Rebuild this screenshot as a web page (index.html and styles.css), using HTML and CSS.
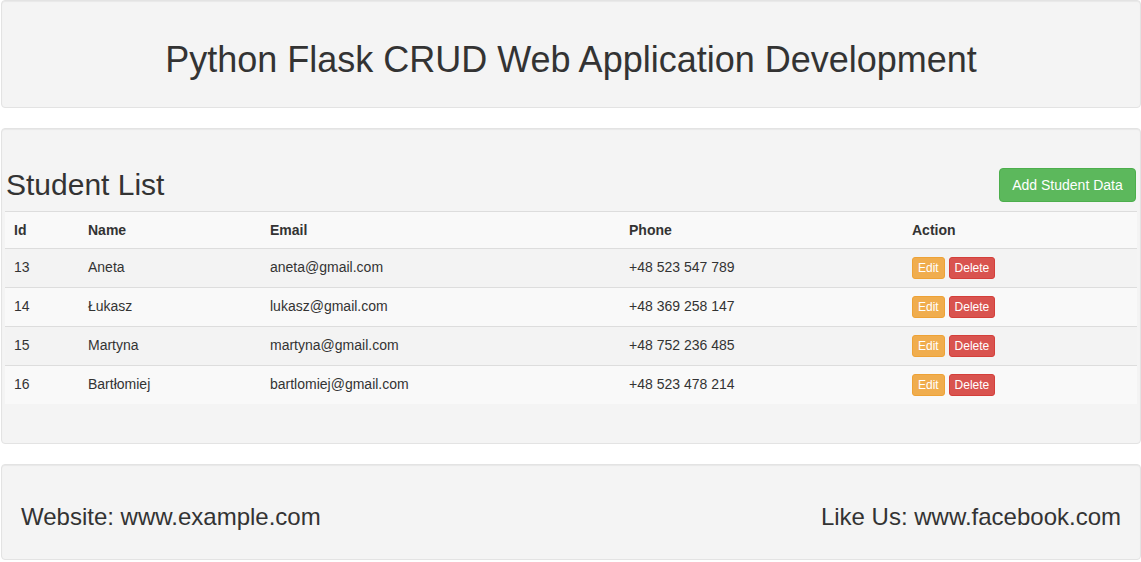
FILE: index.html
```html
<!DOCTYPE html>
<html>
<head>
<meta charset="utf-8">
<title>Python Flask CRUD</title>
<link rel="stylesheet" href="styles.css">
</head>
<body>
<div class="page">
  <div class="well well-head">
    <h1 class="title">Python Flask CRUD Web Application Development</h1>
  </div>

  <div class="well well-main">
    <div class="list-head">
      <h2 class="list-title">Student List</h2>
      <button class="btn btn-success">Add Student Data</button>
    </div>
    <table class="table">
      <colgroup>
        <col class="c-id"><col class="c-name"><col class="c-email"><col class="c-phone"><col class="c-action">
      </colgroup>
      <thead>
        <tr><th>Id</th><th>Name</th><th>Email</th><th>Phone</th><th>Action</th></tr>
      </thead>
      <tbody>
        <tr class="odd"><td>13</td><td>Aneta</td><td>aneta@gmail.com</td><td>+48 523 547 789</td><td><span class="btn-xs btn-warning">Edit</span> <span class="btn-xs btn-danger">Delete</span></td></tr>
        <tr><td>14</td><td>Łukasz</td><td>lukasz@gmail.com</td><td>+48 369 258 147</td><td><span class="btn-xs btn-warning">Edit</span> <span class="btn-xs btn-danger">Delete</span></td></tr>
        <tr class="odd"><td>15</td><td>Martyna</td><td>martyna@gmail.com</td><td>+48 752 236 485</td><td><span class="btn-xs btn-warning">Edit</span> <span class="btn-xs btn-danger">Delete</span></td></tr>
        <tr><td>16</td><td>Bartłomiej</td><td>bartlomiej@gmail.com</td><td>+48 523 478 214</td><td><span class="btn-xs btn-warning">Edit</span> <span class="btn-xs btn-danger">Delete</span></td></tr>
      </tbody>
    </table>
  </div>

  <div class="well well-foot">
    <h3 class="foot-text">Website: www.example.com</h3>
    <h3 class="foot-text">Like Us: www.facebook.com</h3>
  </div>
</div>
</body>
</html>
```

FILE: styles.css
```css
* { box-sizing: border-box; }
html, body { margin: 0; padding: 0; background: #fff; }
body {
  font-family: "Liberation Sans", Arial, sans-serif;
  font-size: 14px;
  line-height: 1.42857;
  color: #333;
}
.page {
  width: 1140px;
  margin-left: 1px;
}
.well {
  background: #f4f4f4;
  border: 1px solid #e3e3e3;
  border-radius: 4px;
  box-shadow: inset 0 1px 1px rgba(0,0,0,0.05);
  margin-bottom: 20px;
}
.well-head {
  padding: 19px;
  height: 108px;
}
.title {
  margin: 20px 0 10px;
  font-size: 36px;
  font-weight: 500;
  line-height: 1.1;
  text-align: center;
  color: #333;
}
.well-main {
  padding: 19px 3px 39px 3px;
  height: 316px;
}
.list-head {
  display: flex;
  justify-content: space-between;
  align-items: flex-start;
  padding: 20px 0 9px;
}
.list-title {
  margin: 0 0 0 1px;
  font-size: 30px;
  font-weight: 500;
  line-height: 33px;
  color: #333;
}
.btn {
  font-family: inherit;
  font-size: 14px;
  line-height: 20px;
  padding: 6px 12px;
  border-radius: 4px;
  border: 1px solid transparent;
  cursor: pointer;
}
.btn-success {
  background: #5cb85c;
  border-color: #4cae4c;
  color: #fff;
  width: 137px;
  height: 34px;
  margin-right: 1px;
}
.table {
  width: 100%;
  border-collapse: collapse;
  border-spacing: 0;
  background: #f9f9f9;
  table-layout: fixed;
}
.c-id { width: 75px; }
.c-name { width: 182px; }
.c-email { width: 359px; }
.c-phone { width: 283px; }
.c-action { width: auto; }
.table th, .table td {
  text-align: left;
  padding: 8px;
  vertical-align: middle;
  border-top: 1px solid #ddd;
}
.table th:first-child, .table td:first-child { padding-left: 9px; }
.table th {
  font-weight: bold;
  height: 37px;
  padding-top: 9px;
  padding-bottom: 7px;
}
.table td { height: 39px; }
.table tbody tr:last-child td { height: 38px; }
.table tr.odd td { background: #f3f3f3; }
.btn-xs {
  display: inline-block;
  font-size: 12px;
  line-height: 18px;
  padding: 1px 5px;
  border-radius: 3px;
  border: 1px solid transparent;
  color: #fff;
  vertical-align: middle;
}
.btn-warning { background: #f0ad4e; border-color: #eea236; }
.btn-danger { background: #d9534f; border-color: #d43f3a; }
.well-foot {
  padding: 19px;
  height: 96px;
  display: flex;
  justify-content: space-between;
  align-items: center;
  margin-bottom: 0;
}
.foot-text {
  margin: 0;
  font-size: 24px;
  font-weight: 500;
  line-height: 26px;
  color: #333;
  padding-top: 9px;
}
```
